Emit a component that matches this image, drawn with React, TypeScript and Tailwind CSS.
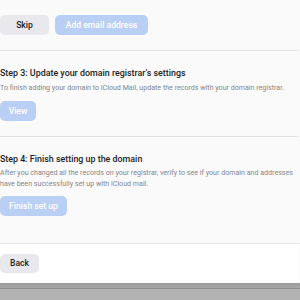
export default function App() {
  const font = { fontFamily: "Roboto, 'Noto Sans', sans-serif" };
  return (
    <div style={font} className="flex h-[300px] w-[300px] flex-col overflow-hidden bg-[#fafafa] text-[#1d1d1f]">
      <div className="w-[298px] flex-1 bg-[#fafafa]">
        <div className="flex h-[50px] items-start gap-[6px] pt-[15px]">
          <button className="h-[20px] w-[49px] rounded-[5px] bg-[#e8e8ed] text-[8.6px] font-medium text-[#1d1d1f]">Skip</button>
          <button className="h-[20px] w-[93px] rounded-[5px] bg-[#b9cff3] text-[8.6px] font-medium text-white">Add email address</button>
        </div>
        <div className="h-px bg-[#e1e1e3]" />
        <div className="flex h-[85px] flex-col items-start">
          <h2 className="mt-[16px] text-[8.9px] leading-[12px] font-medium">Step 3: Update your domain registrar’s settings</h2>
          <p className="mt-[4px] text-[7.1px] leading-[10px] text-[#86868b]">To finish adding your domain to iCloud Mail, update the records with your domain registrar.</p>
          <button className="mt-[8px] h-[20px] w-[36px] rounded-[5px] bg-[#b9cff3] text-[8.6px] font-medium text-white">View</button>
        </div>
        <div className="h-px bg-[#e1e1e3]" />
        <div className="flex h-[106px] flex-col items-start">
          <h2 className="mt-[16px] text-[8.9px] leading-[12px] font-medium">Step 4: Finish setting up the domain</h2>
          <p className="mt-[2px] text-[7.1px] leading-[11px] text-[#86868b]">After you changed all the records on your registrar, verify to see if your domain and addresses have been successfully set up with iCloud mail.</p>
          <button className="mt-[7px] h-[20px] w-[67px] rounded-[5px] bg-[#b9cff3] text-[8.6px] font-medium text-white">Finish set up</button>
        </div>
      </div>
      <div className="h-px bg-[#e6e6e6]" />
      <div className="flex h-[39px] w-[299px] items-start bg-white pt-[10px]">
        <button className="h-[19px] w-[39px] rounded-[5px] bg-[#e8e8ed] text-[8.6px] font-medium text-[#1d1d1f]">Back</button>
      </div>
      <div className="flex h-[17px] flex-col">
        <div className="h-[5px] bg-gradient-to-b from-[#9a9a9a] to-[#a8a8a8]" />
        <div className="h-px bg-[#8f8f8f]" />
        <div className="flex-1 bg-[#b3b3b3]" />
      </div>
    </div>
  );
}
